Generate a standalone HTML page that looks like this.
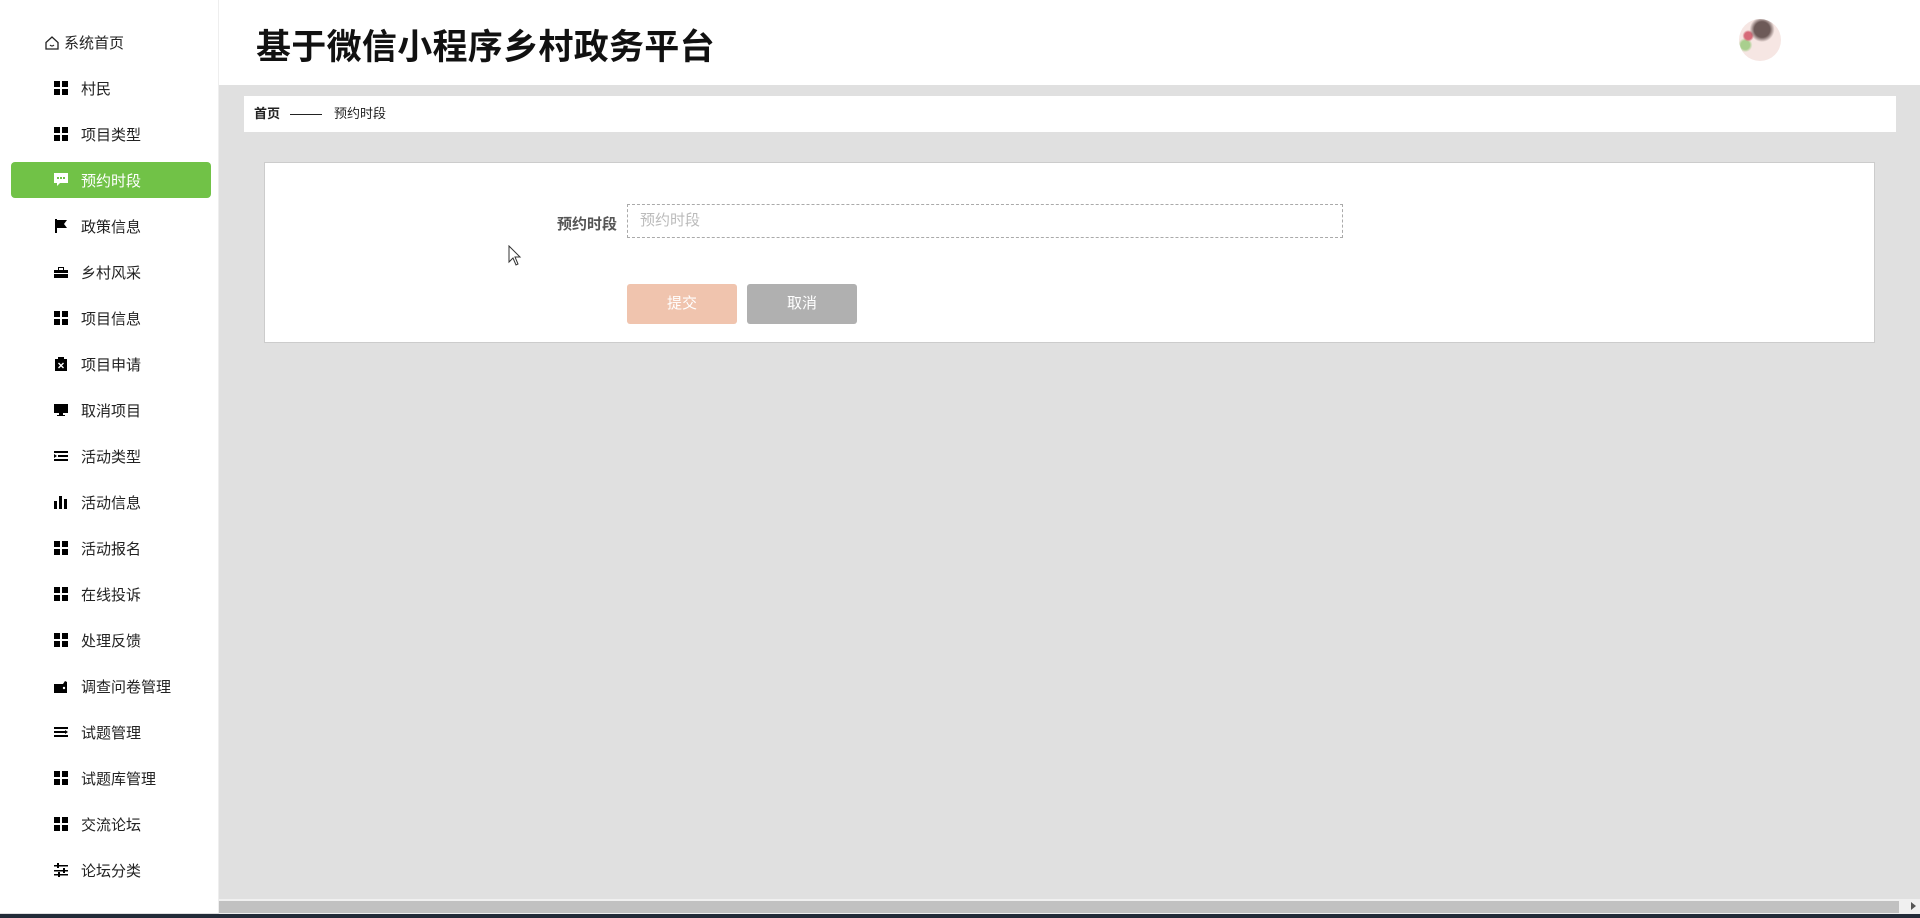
<!DOCTYPE html>
<html><head><meta charset="utf-8">
<style>
*{margin:0;padding:0;box-sizing:border-box}
body{width:1920px;height:918px;overflow:hidden;background:#e0e0e0;font-family:"Liberation Sans","Noto Sans CJK SC",sans-serif;position:relative}
.side{position:absolute;left:0;top:0;width:219px;height:913px;background:#fff;border-right:1px solid #eee}
.home{position:absolute;left:44px;top:32px;font-size:15px;color:#222;display:flex;align-items:center}
.home svg{margin-right:4px}
.item{position:absolute;left:11px;width:200px;height:36px;border-radius:4px;display:flex;align-items:center;font-size:15px;color:#222}
.item svg{position:absolute;left:43px;top:11px}
.item span{position:absolute;left:70px}
.item.on{background:#71c247;color:#fff}
.top{position:absolute;left:219px;top:0;width:1701px;height:85px;background:#fff}
.title{position:absolute;left:256px;top:19px;font-size:35px;font-weight:bold;color:#111;letter-spacing:0.3px}
.avatar{position:absolute;left:1739px;top:19px;width:42px;height:42px;border-radius:50%;background:radial-gradient(circle at 55% 25%,#6d5a58 0 20%,transparent 32%),radial-gradient(circle at 22% 40%,#d66a78 0 9%,transparent 14%),radial-gradient(circle at 15% 62%,#a9cf8e 0 10%,transparent 16%),#f6e6e3}
.crumb{position:absolute;left:244px;top:96px;width:1652px;height:36px;background:#fff;font-size:13px;color:#222;line-height:36px}
.crumb b{position:absolute;left:10px}
.crumb i{position:absolute;left:46px;top:18px;width:32px;height:1px;background:#222}
.crumb span{position:absolute;left:90px}
.card{position:absolute;left:264px;top:162px;width:1611px;height:181px;background:#fff;border:1px solid #ccc}
.lbl{position:absolute;left:557px;top:213px;font-size:15px;color:#555;font-weight:bold}
.inp{position:absolute;left:627px;top:204px;width:716px;height:34px;border:1px dashed #aaa;font-size:15px;color:#bbb;padding-left:12px;line-height:32px}
.btn{position:absolute;top:284px;width:110px;height:40px;border-radius:3px;color:#fff;font-size:15px;text-align:center;line-height:40px}
.hs{position:absolute;left:219px;top:899px;width:1701px;height:15px;background:#f0f0f0}
.hs .th{position:absolute;left:0;top:2px;width:1680px;height:12px;background:#c1c1c1}
.hs .ar{position:absolute;right:4px;top:3px;width:0;height:0;border-left:5px solid #555;border-top:4px solid transparent;border-bottom:4px solid transparent}
.bar{position:absolute;left:0;top:914px;width:1920px;height:4px;background:#222b38}
</style></head><body>
<div class="side">
 <div class="home"><svg width="16" height="16" viewBox="0 0 16 16"><path d="M2 7.5 8 2l6 5.5V14H2z" fill="none" stroke="#222" stroke-width="1.3"/><path d="M6 10q2 2 4 0" fill="none" stroke="#222" stroke-width="1.2"/></svg>系统首页</div>
 <div class="item" style="top:70px"><svg width="14" height="14"><rect x="0" y="0" width="6" height="6"/><rect x="8" y="0" width="6" height="6"/><rect x="0" y="8" width="6" height="6"/><rect x="8" y="8" width="6" height="6"/></svg><span>村民</span></div>
 <div class="item" style="top:116px"><svg width="14" height="14"><rect x="0" y="0" width="6" height="6"/><rect x="8" y="0" width="6" height="6"/><rect x="0" y="8" width="6" height="6"/><rect x="8" y="8" width="6" height="6"/></svg><span>项目类型</span></div>
 <div class="item on" style="top:162px"><svg width="14" height="14"><path d="M0 0h14v10H6l-3 3v-3H0z" fill="#fff"/><rect x="3" y="4" width="2" height="2" fill="#71c247"/><rect x="6" y="4" width="2" height="2" fill="#71c247"/><rect x="9" y="4" width="2" height="2" fill="#71c247"/></svg><span>预约时段</span></div>
 <div class="item" style="top:208px"><svg width="14" height="14"><path d="M1 0h2v14H1zM3 1h10l-3 4 3 4H3z"/></svg><span>政策信息</span></div>
 <div class="item" style="top:254px"><svg width="14" height="14"><path d="M4 2h6v3H9V3H5v2H4zM0 5h14v3H0zM0 9h14v4H0z"/></svg><span>乡村风采</span></div>
 <div class="item" style="top:300px"><svg width="14" height="14"><rect x="0" y="0" width="6" height="6"/><rect x="8" y="0" width="6" height="6"/><rect x="0" y="8" width="6" height="6"/><rect x="8" y="8" width="6" height="6"/></svg><span>项目信息</span></div>
 <div class="item" style="top:346px"><svg width="14" height="14"><path d="M1 2h12v12H1z"/><rect x="4" y="0" width="6" height="3"/><path d="M4.5 6l5 5M9.5 6l-5 5" stroke="#fff" stroke-width="1.4"/></svg><span>项目申请</span></div>
 <div class="item" style="top:392px"><svg width="14" height="14"><rect x="0" y="1" width="14" height="9"/><rect x="5" y="10" width="4" height="2"/><rect x="3" y="12" width="8" height="1"/></svg><span>取消项目</span></div>
 <div class="item" style="top:438px"><svg width="14" height="14"><rect x="0" y="2" width="14" height="2"/><rect x="4" y="6" width="10" height="2"/><rect x="0" y="10" width="14" height="2"/><path d="M0 5l3 2-3 2z"/></svg><span>活动类型</span></div>
 <div class="item" style="top:484px"><svg width="14" height="14"><rect x="0" y="6" width="3" height="8"/><rect x="5" y="1" width="3" height="13"/><rect x="10" y="4" width="3" height="10"/></svg><span>活动信息</span></div>
 <div class="item" style="top:530px"><svg width="14" height="14"><rect x="0" y="0" width="6" height="6"/><rect x="8" y="0" width="6" height="6"/><rect x="0" y="8" width="6" height="6"/><rect x="8" y="8" width="6" height="6"/></svg><span>活动报名</span></div>
 <div class="item" style="top:576px"><svg width="14" height="14"><rect x="0" y="0" width="6" height="6"/><rect x="8" y="0" width="6" height="6"/><rect x="0" y="8" width="6" height="6"/><rect x="8" y="8" width="6" height="6"/></svg><span>在线投诉</span></div>
 <div class="item" style="top:622px"><svg width="14" height="14"><rect x="0" y="0" width="6" height="6"/><rect x="8" y="0" width="6" height="6"/><rect x="0" y="8" width="6" height="6"/><rect x="8" y="8" width="6" height="6"/></svg><span>处理反馈</span></div>
 <div class="item" style="top:668px"><svg width="14" height="14"><path d="M0 5h9l2-3 2 1v11H0z"/><circle cx="10" cy="9" r="1.2" fill="#fff"/></svg><span>调查问卷管理</span></div>
 <div class="item" style="top:714px"><svg width="14" height="14"><rect x="0" y="2" width="14" height="2"/><rect x="0" y="6" width="11" height="2"/><rect x="0" y="10" width="14" height="2"/><path d="M11 5l3 2-3 2z"/></svg><span>试题管理</span></div>
 <div class="item" style="top:760px"><svg width="14" height="14"><rect x="0" y="0" width="6" height="6"/><rect x="8" y="0" width="6" height="6"/><rect x="0" y="8" width="6" height="6"/><rect x="8" y="8" width="6" height="6"/></svg><span>试题库管理</span></div>
 <div class="item" style="top:806px"><svg width="14" height="14"><rect x="0" y="0" width="6" height="6"/><rect x="8" y="0" width="6" height="6"/><rect x="0" y="8" width="6" height="6"/><rect x="8" y="8" width="6" height="6"/></svg><span>交流论坛</span></div>
 <div class="item" style="top:852px"><svg width="14" height="14"><rect x="0" y="2" width="14" height="1.5"/><rect x="0" y="7" width="14" height="1.5"/><rect x="0" y="11" width="14" height="1.5"/><rect x="3" y="0" width="2" height="5"/><rect x="9" y="5" width="2" height="5"/><rect x="4" y="9" width="2" height="5"/></svg><span>论坛分类</span></div>
</div>
<div class="top"></div>
<div class="title">基于微信小程序乡村政务平台</div>
<div class="avatar"></div>
<div class="crumb"><b>首页</b><i></i><span>预约时段</span></div>
<div class="card"></div>
<div class="lbl">预约时段</div>
<div class="inp">预约时段</div>
<div class="btn" style="left:627px;background:#f0c4ae">提交</div>
<div class="btn" style="left:747px;background:#b0b0b0">取消</div>
<svg style="position:absolute;left:508px;top:245px" width="14" height="22" viewBox="0 0 14 22"><path d="M1 1v16l4-4 3 7 2-1-3-7h5z" fill="#fff" stroke="#333" stroke-width="1"/></svg>
<div class="hs"><div class="th"></div><div class="ar"></div></div>
<div class="bar"></div>
</body></html>
